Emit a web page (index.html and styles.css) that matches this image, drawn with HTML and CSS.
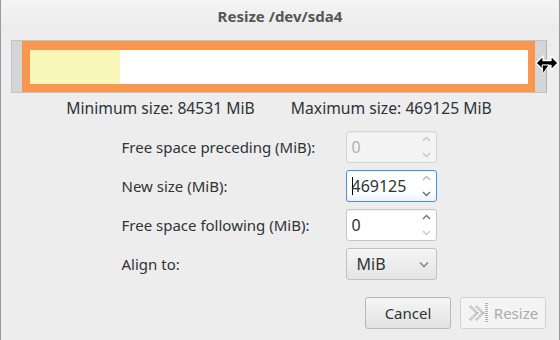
FILE: index.html
```html
<!DOCTYPE html>
<html lang="en">
<head>
    <meta charset="UTF-8">
    <title>Resize /dev/sda4</title>
    <link rel="stylesheet" href="styles.css">
</head>
<body>
    <div class="dialog">
        <div class="titlebar">Resize /dev/sda4</div>

        <div class="content">
            <div class="track">
                <div class="part">
                    <div class="part-inner">
                        <div class="used"></div>
                    </div>
                </div>
                <svg class="cursor" width="24" height="22" viewBox="0 0 24 22">
                    <path d="M1 9 L8 2 L8 6.5 L16 6.5 L16 2 L23 9 L16 16 L16 11.5 L8 11.5 L8 16 Z" fill="#000" stroke="#fff" stroke-width="1.3" stroke-linejoin="round"/>
                    <path d="M7 11 L14 11 L8 20 Z" fill="#000" stroke="#fff" stroke-width="1"/>
                </svg>
            </div>

            <div class="limits">
                <span>Minimum size: 84531 MiB</span>
                <span>Maximum size: 469125 MiB</span>
            </div>

            <div class="form">
                <label>Free space preceding (MiB):</label>
                <div class="spin disabled">
                    <span class="value">0</span>
                    <span class="arrows">
                        <svg width="9" height="6" viewBox="0 0 9 6"><path d="M1 5 L4.5 1.5 L8 5" fill="none" stroke="#c4c6c7" stroke-width="1.4"/></svg>
                        <svg width="9" height="6" viewBox="0 0 9 6"><path d="M1 1 L4.5 4.5 L8 1" fill="none" stroke="#c4c6c7" stroke-width="1.4"/></svg>
                    </span>
                </div>

                <label>New size (MiB):</label>
                <div class="spin focused">
                    <span class="value"><span class="caret"></span>469125</span>
                    <span class="arrows">
                        <svg width="9" height="6" viewBox="0 0 9 6"><path d="M1 5 L4.5 1.5 L8 5" fill="none" stroke="#b8babb" stroke-width="1.4"/></svg>
                        <svg width="9" height="6" viewBox="0 0 9 6"><path d="M1 1 L4.5 4.5 L8 1" fill="none" stroke="#6e7071" stroke-width="1.4"/></svg>
                    </span>
                </div>

                <label>Free space following (MiB):</label>
                <div class="spin">
                    <span class="value">0</span>
                    <span class="arrows">
                        <svg width="9" height="6" viewBox="0 0 9 6"><path d="M1 5 L4.5 1.5 L8 5" fill="none" stroke="#6e7071" stroke-width="1.4"/></svg>
                        <svg width="9" height="6" viewBox="0 0 9 6"><path d="M1 1 L4.5 4.5 L8 1" fill="none" stroke="#c4c6c7" stroke-width="1.4"/></svg>
                    </span>
                </div>

                <label>Align to:</label>
                <div class="combo">
                    <span>MiB</span>
                    <svg width="10" height="7" viewBox="0 0 10 7"><path d="M1 1.5 L5 5.5 L9 1.5" fill="none" stroke="#8a8c8d" stroke-width="1.6"/></svg>
                </div>
            </div>

            <div class="actions">
                <button class="btn">Cancel</button>
                <button class="btn disabled">
                    <svg width="24" height="24" viewBox="0 0 24 24">
                        <path d="M2 5 L9 12 L2 19" fill="none" stroke="#b4b4b4" stroke-width="2.6" stroke-dasharray="1.4 0.9"/>
                        <path d="M8 5 L15 12 L8 19" fill="none" stroke="#b4b4b4" stroke-width="2.6" stroke-dasharray="1.4 0.9"/>
                        <path d="M18.5 2 L18.5 22" fill="none" stroke="#a6a6a6" stroke-width="2.6" stroke-dasharray="1 1"/>
                    </svg>
                    Resize
                </button>
            </div>
        </div>
    </div>
</body>
</html>
```

FILE: styles.css
```css
body {
    margin: 0;
    font-family: "Noto Sans", "Open Sans", sans-serif;
    font-size: 15px;
    color: #2e3436;
    background: #ededed;
}
.dialog {
    width: 558px;
    height: 340px;
    border-left: 1px solid #9a9a9a;
    border-right: 1px solid #9a9a9a;
    background: #ededed;
    display: flex;
    flex-direction: column;
}
.titlebar {
    height: 32px;
    line-height: 32px;
    text-align: center;
    font-weight: bold;
    color: #555753;
    background: linear-gradient(#f4f4f4, #ebebeb);
}
.content {
    padding: 8px 12px 0 10px;
    display: flex;
    flex-direction: column;
}

/* partition bar */
.track {
    position: relative;
    height: 51px;
    background: #d3d5d6;
    border: 1px solid #c0c2c3;
    border-right-color: #b0b2b3;
    padding-left: 10px;
    padding-right: 11px;
    display: flex;
}
.part {
    flex: 1;
    background: #f8974d;
    padding: 9px 7px 8px 8px;
    display: flex;
}
.part-inner {
    flex: 1;
    background: #fff;
    display: flex;
}
.used {
    width: 90px;
    background: #f8f7b7;
}
.cursor {
    position: absolute;
    right: -13px;
    top: 13px;
}

.limits {
    display: flex;
    justify-content: center;
    gap: 36px;
    height: 32px;
    line-height: 30px;
    font-size: 15.7px;
}

/* form */
.form {
    display: grid;
    grid-template-columns: 224px 91px;
    grid-auto-rows: 32px;
    row-gap: 7px;
    justify-content: center;
    margin-top: 6px;
}
.form label {
    line-height: 32px;
}
.spin {
    display: flex;
    align-items: center;
    border: 1px solid #c4c6c7;
    border-radius: 3px;
    background: #fff;
    box-shadow: inset 0 1px 1px rgba(0, 0, 0, 0.05);
}
.spin .value {
    flex: 1;
    padding-left: 5px;
    font-size: 16px;
    display: flex;
    align-items: center;
}
.spin .arrows {
    width: 18px;
    height: 100%;
    display: flex;
    flex-direction: column;
    align-items: center;
    justify-content: center;
    gap: 10px;
}
.spin .arrows svg {
    display: block;
}
.spin.disabled {
    background: #f4f4f4;
    border-color: #d3d5d6;
    color: #b0b2b3;
}
.spin.focused {
    border-color: #4a90d9;
    background: linear-gradient(#fff 70%, #eef3fa);
}
.caret {
    display: inline-block;
    width: 1px;
    height: 18px;
    background: #000;
    margin-right: -1px;
}
.combo {
    display: flex;
    align-items: center;
    justify-content: space-between;
    padding: 0 7px 0 10px;
    border: 1px solid #bfc1c2;
    border-radius: 3px;
    background: linear-gradient(#f6f6f6, #e4e4e4);
    font-size: 16px;
}

/* buttons */
.actions {
    display: flex;
    justify-content: flex-end;
    gap: 9px;
    margin-top: 17px;
    padding-right: 1px;
}
.btn {
    width: 86px;
    height: 32px;
    font-family: inherit;
    font-size: 15px;
    color: #2e3436;
    border: 1px solid #b6b8b9;
    border-radius: 3px;
    background: linear-gradient(#f6f6f6, #e2e2e2);
    display: flex;
    align-items: center;
    justify-content: center;
    gap: 2px;
    padding: 0;
}
.btn.disabled {
    color: #a9abac;
    background: #f4f4f4;
    border-color: #d0d2d3;
}
```
